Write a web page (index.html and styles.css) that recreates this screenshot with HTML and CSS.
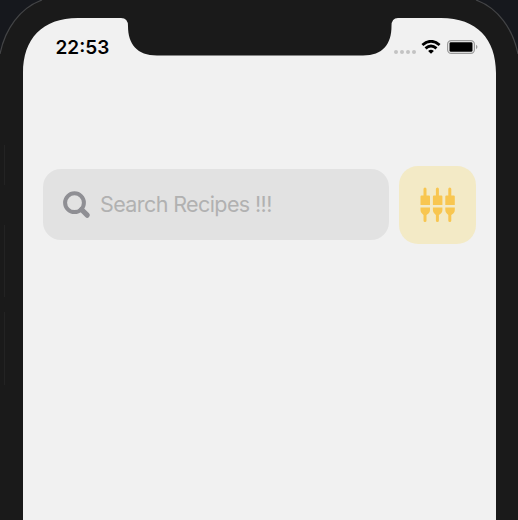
FILE: index.html
```html
<!DOCTYPE html>
<html lang="en">
<head>
<meta charset="utf-8">
<title>Search Recipes</title>
<link rel="stylesheet" href="styles.css">
</head>
<body>
<div class="phone">
  <svg class="frame" viewBox="0 0 518 520" aria-hidden="true">
    <path d="M0 520V54C5 29 20 8 42 0H476C498 8 513 29 518 54V520Z" fill="#1a1a1a"/>
    <path d="M0 54C5 29 20 8 42 0M476 0C498 8 513 29 518 54" fill="none" stroke="#434446" stroke-width="1.2"/>
    <path d="M4.500 145V185M4.500 225V297M4.500 312V385" fill="none" stroke="#232323"/>
    <path d="M23 520V73C23 39 42 18 78 18H121Q128 18 128 26C128 44 137 55.500 157 55.500H363C383 55.500 391.500 44 391.500 26Q391.500 18 398 18H441C477 18 496 39 496 73V520Z" fill="#f1f1f1"/>
  </svg>
  <main class="screen">
    <header class="status">
      <span class="time">22:53</span>
      <div class="indicators">
        <svg class="signal" viewBox="0 0 22 4"><g fill="#c3c3c3"><circle cx="2" cy="2" r="2"/><circle cx="8" cy="2" r="2"/><circle cx="14" cy="2" r="2"/><circle cx="20" cy="2" r="2"/></g></svg>
        <svg class="wifi" viewBox="0 0 20 14"><path d="M1.400 5Q10-2.300 18.600 5M4.500 8.400Q10 3.800 15.500 8.400" fill="none" stroke="#000" stroke-width="2.900"/><path d="M7.100 10.900Q10 8.500 12.900 10.900L10 13.800Z"/></svg>
        <svg class="battery" viewBox="0 0 31 14"><rect x=".6" y=".6" width="26.800" height="12.800" rx="3.600" fill="none" stroke="#9b9b9b" stroke-width="1.200"/><rect x="2.500" y="2.300" width="23" height="9.400" rx="1.300"/><path d="M29 4.800Q32 7 29 9.200Z" fill="#9b9b9b"/></svg>
      </div>
    </header>
    <div class="toolbar">
      <label class="search">
        <svg class="search-icon" viewBox="0 0 28 28"><circle cx="11.500" cy="11.700" r="9.400" fill="none" stroke="#8f8f94" stroke-width="4"/><path d="M18.500 18.500L24.200 24.200" stroke="#8f8f94" stroke-width="5.200" stroke-linecap="round"/></svg>
        <span class="placeholder">Search Recipes !!!</span>
      </label>
      <button class="filter" aria-label="Filter">
        <svg class="filter-icon" viewBox="0 0 36 36"><g fill="#f8c650"><path id="slider" d="M3.500 2Q3.500 .5 5 .5T6.500 2V8.500H9Q10 8.500 10 9.500V18H.5V9.500Q.5 8.500 1.500 8.500H3.500ZM.5 20.500H10V23Q10 25 8.500 26.500L6.500 28V33.500Q6.500 35 5 35T3.500 33.500V28L2 26.500Q.5 25 .5 23Z"/><use href="#slider" x="12.400"/><use href="#slider" x="24.800"/></g></svg>
      </button>
    </div>
  </main>
</div>
</body>
</html>
```

FILE: styles.css
```css
* {
  box-sizing: border-box;
}

body {
  margin: 0;
  overflow: hidden;
  background: #16181d;
  font-family: Inter, Roboto, sans-serif;
}

.phone {
  position: relative;
  width: 518px;
  height: 520px;
}

.frame {
  position: absolute;
  inset: 0;
  width: 100%;
  height: 100%;
}

.screen {
  position: relative;
  width: 496px;
  padding: 36px 20px 0 43px;
}

.status {
  display: flex;
  align-items: center;
  justify-content: space-between;
  height: 22px;
  padding-left: 12.5px;
  margin-right: -2px;
}

.time {
  padding-top: 2px;
  font-size: 19px;
  line-height: 22px;
  font-weight: 600;
}

.indicators {
  display: flex;
  align-items: center;
}

.signal {
  width: 22px;
  height: 4px;
  margin: 9px 5px 0 0;
}

.wifi {
  width: 20px;
  height: 14px;
  margin-right: 6px;
}

.battery {
  width: 31px;
  height: 14px;
}

.toolbar {
  display: flex;
  align-items: center;
  gap: 10px;
  width: 433px;
  margin-top: 108px;
}

.search {
  display: flex;
  flex: 1;
  align-items: center;
  height: 71px;
  padding-left: 20px;
  border-radius: 18px;
  background: #e2e2e2;
}

.search-icon {
  width: 28px;
  height: 28px;
  margin-right: 9px;
}

.placeholder {
  padding-bottom: 1px;
  color: #b1b1b1;
  font-size: 21.5px;
  letter-spacing: -0.6px;
  white-space: nowrap;
}

.filter {
  display: grid;
  place-items: center;
  width: 77.5px;
  height: 77.5px;
  padding: 0;
  border: 0;
  border-radius: 19px;
  background: #f3eac6;
}

.filter-icon {
  width: 36px;
  height: 36px;
  margin-left: 1px;
}
```
